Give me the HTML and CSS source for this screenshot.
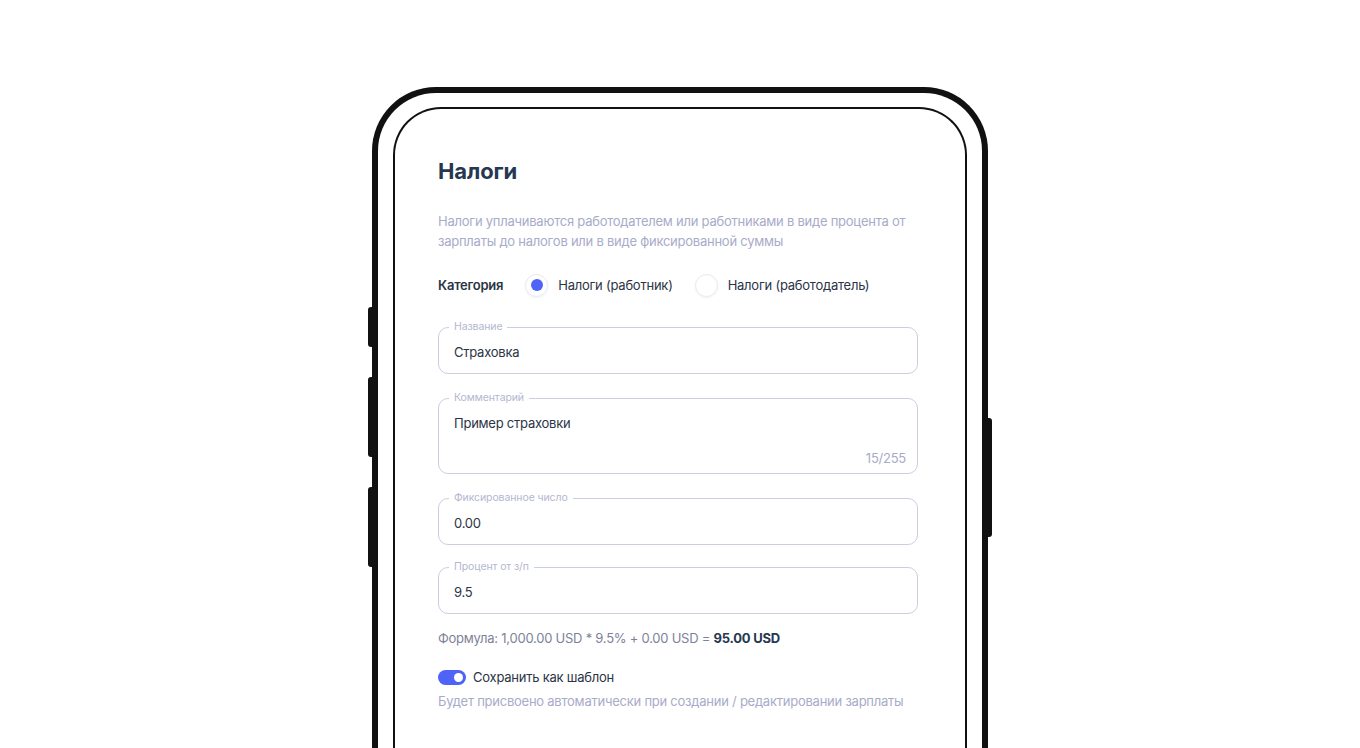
FILE: index.html
```html
<!DOCTYPE html>
<html lang="ru">
<head>
<meta charset="utf-8">
<title>Налоги</title>
<link rel="stylesheet" href="styles.css">
</head>
<body>
<div class="phone">
  <span class="btn btn-l1"></span>
  <span class="btn btn-l2"></span>
  <span class="btn btn-l3"></span>
  <span class="btn btn-r1"></span>
  <div class="screen">
    <div class="content">
      <h1 class="title">Налоги</h1>
      <p class="desc">Налоги уплачиваются работодателем или работниками в виде процента от зарплаты до налогов или в виде фиксированной суммы</p>
      <div class="category">
        <span class="cat-label">Категория</span>
        <span class="radio checked"><span class="dot"></span></span>
        <span class="radio-text">Налоги (работник)</span>
        <span class="radio"></span>
        <span class="radio-text">Налоги (работодатель)</span>
      </div>
      <div class="field">
        <span class="legend">Название</span>
        <span class="value">Страховка</span>
      </div>
      <div class="field field-area">
        <span class="legend">Комментарий</span>
        <span class="value">Пример страховки</span>
        <span class="counter">15/255</span>
      </div>
      <div class="field field-fixed">
        <span class="legend">Фиксированное число</span>
        <span class="value">0.00</span>
      </div>
      <div class="field field-percent">
        <span class="legend">Процент от з/п</span>
        <span class="value">9.5</span>
      </div>
      <p class="formula">Формула: 1,000.00 USD * 9.5% + 0.00 USD = <b>95.00 USD</b></p>
      <div class="toggle-row">
        <span class="toggle"><span class="knob"></span></span>
        <span class="toggle-text">Сохранить как шаблон</span>
      </div>
      <p class="hint">Будет присвоено автоматически при создании / редактировании зарплаты</p>
    </div>
  </div>
</div>
</body>
</html>
```
FILE: styles.css
```css
html, body {
  margin: 0;
  padding: 0;
  background: #ffffff;
  overflow: hidden;
  height: 748px;
}
body {
  font-family: "Inter", "Noto Sans", sans-serif;
  color: #2b3445;
}
.phone {
  position: relative;
  box-sizing: border-box;
  width: 616px;
  height: 760px;
  margin: 87px 0 0 372px;
  border: 6px solid #111111;
  border-bottom: none;
  border-radius: 64px 64px 0 0;
  padding: 14px 15px 0 15px;
}
.btn {
  position: absolute;
  width: 5px;
  background: #111111;
}
.btn-l1, .btn-l2, .btn-l3 {
  left: -10px;
  border-radius: 3px 0 0 3px;
}
.btn-l1 { top: 214px; height: 40px; }
.btn-l2 { top: 284px; height: 80px; }
.btn-l3 { top: 394px; height: 80px; }
.btn-r1 {
  right: -10px;
  top: 325px;
  height: 119px;
  border-radius: 0 3px 3px 0;
}
.screen {
  box-sizing: border-box;
  height: 100%;
  border: 2px solid #111111;
  border-bottom: none;
  border-radius: 48px 48px 0 0;
  padding: 48px 0 0 43px;
}
.content {
  width: 482px;
  letter-spacing: -0.24px;
}
.title {
  margin: 0;
  font-size: 22px;
  line-height: 28px;
  font-weight: 700;
  color: #263850;
  letter-spacing: -0.1px;
}
.desc {
  margin: 26px 0 0 0;
  font-size: 13px;
  line-height: 20px;
  color: #a8abc9;
}
.category {
  margin-top: 23px;
  display: flex;
  align-items: center;
  height: 22px;
  font-size: 13px;
}
.cat-label {
  font-weight: 600;
  color: #2b3445;
  margin-right: 22px;
}
.radio {
  box-sizing: border-box;
  width: 23px;
  height: 23px;
  border-radius: 50%;
  border: 1px solid #e7e8f0;
  box-shadow: 0 1px 2px rgba(40, 50, 90, 0.06);
  display: flex;
  align-items: center;
  justify-content: center;
  margin-right: 10px;
}
.dot {
  width: 12px;
  height: 12px;
  border-radius: 50%;
  background: #4f63f7;
}
.radio-text {
  color: #2b3445;
  margin-right: 22px;
}
.field {
  position: relative;
  box-sizing: border-box;
  width: 480px;
  height: 47px;
  margin-top: 24px;
  border: 1.5px solid #cbcee2;
  border-radius: 10px;
  padding: 14px 15px 0 15px;
  font-size: 13px;
}
.category + .field {
  margin-top: 31px;
}
.field-area {
  height: 76px;
  margin-top: 24px;
}
.field-fixed {
  margin-top: 24px;
}
.field-percent {
  margin-top: 22px;
}
.legend {
  position: absolute;
  left: 10px;
  top: -8px;
  padding: 0 5px;
  background: #ffffff;
  font-size: 10.5px;
  line-height: 14px;
  color: #b4b7cf;
  letter-spacing: -0.1px;
}
.value {
  display: block;
  line-height: 20px;
  color: #2b3445;
}
.counter {
  position: absolute;
  right: 11px;
  bottom: 5px;
  line-height: 20px;
  color: #a8abc9;
}
.formula {
  margin: 14px 0 0 0;
  font-size: 13px;
  line-height: 20px;
  color: #7e8298;
}
.formula b {
  color: #263850;
  font-weight: 700;
}
.toggle-row {
  margin-top: 19px;
  display: flex;
  align-items: center;
  height: 20px;
  font-size: 13px;
}
.toggle {
  box-sizing: border-box;
  width: 28px;
  height: 15px;
  border-radius: 8px;
  background: #4f63f7;
  display: flex;
  align-items: center;
  justify-content: flex-end;
  padding-right: 3px;
  margin-right: 7px;
}
.knob {
  width: 9px;
  height: 9px;
  border-radius: 50%;
  background: #ffffff;
}
.toggle-text {
  color: #2b3445;
}
.hint {
  margin: 4px 0 0 0;
  font-size: 13px;
  line-height: 20px;
  color: #a8abc9;
}
```
